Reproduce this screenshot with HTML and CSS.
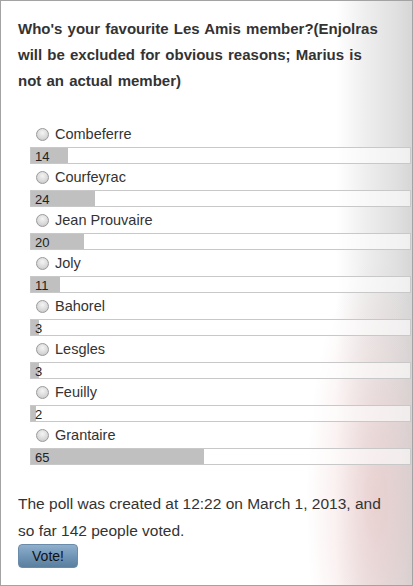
FILE: index.html
```html
<!DOCTYPE html>
<html>
<head>
<meta charset="utf-8">
<link rel="stylesheet" href="styles.css">
</head>
<body>
<div class="page">
  <h1 class="question">Who's your favourite Les Amis member?(Enjolras will be excluded for obvious reasons; Marius is<br>not an actual member)</h1>
  <ul class="options">
    <li class="option"><label class="choice"><span class="radio"></span>Combeferre</label><div class="bar"><div class="fill" style="width:9.86%"></div><span class="count">14</span></div></li>
    <li class="option"><label class="choice"><span class="radio"></span>Courfeyrac</label><div class="bar"><div class="fill" style="width:16.9%"></div><span class="count">24</span></div></li>
    <li class="option"><label class="choice"><span class="radio"></span>Jean Prouvaire</label><div class="bar"><div class="fill" style="width:14.08%"></div><span class="count">20</span></div></li>
    <li class="option"><label class="choice"><span class="radio"></span>Joly</label><div class="bar"><div class="fill" style="width:7.75%"></div><span class="count">11</span></div></li>
    <li class="option"><label class="choice"><span class="radio"></span>Bahorel</label><div class="bar"><div class="fill" style="width:2.11%"></div><span class="count">3</span></div></li>
    <li class="option"><label class="choice"><span class="radio"></span>Lesgles</label><div class="bar"><div class="fill" style="width:2.11%"></div><span class="count">3</span></div></li>
    <li class="option"><label class="choice"><span class="radio"></span>Feuilly</label><div class="bar"><div class="fill" style="width:1.41%"></div><span class="count">2</span></div></li>
    <li class="option"><label class="choice"><span class="radio"></span>Grantaire</label><div class="bar"><div class="fill" style="width:45.77%"></div><span class="count">65</span></div></li>
  </ul>
  <p class="info">The poll was created at 12:22 on March 1, 2013, and so far 142 people voted.</p>
  <button class="vote">Vote!</button>
</div>
</body>
</html>
```
FILE: styles.css
```css
html, body {
  margin: 0;
  padding: 0;
}
body {
  font-family: "Liberation Sans", Arial, sans-serif;
  color: #333;
}
.page {
  box-sizing: border-box;
  width: 413px;
  height: 586px;
  border: 1px solid #a3a3a3;
  padding: 15px 0 0 17px;
  background:
    radial-gradient(ellipse 70px 240px at 375px 500px, rgba(232, 178, 178, 0.45), rgba(232, 178, 178, 0) 100%),
    linear-gradient(to right, #ffffff 0, #ffffff 335px, #eeeeee 365px, #e0e0e0 395px, #d6d6d6 411px);
}
.question {
  margin: 0;
  font-size: 15px;
  font-weight: bold;
  line-height: 26px;
  word-spacing: 1px;
  color: #333;
  padding-right: 10px;
}
.options {
  list-style: none;
  margin: 27px 0 0 12px;
  padding: 0;
}
.option {
  display: flex;
  flex-direction: column;
}
.choice {
  height: 26px;
  display: flex;
  align-items: center;
  font-size: 14.5px;
  padding-left: 6px;
  color: #333;
}
.radio {
  box-sizing: border-box;
  width: 13px;
  height: 13px;
  border-radius: 50%;
  border: 1px solid #9a9a9a;
  background: radial-gradient(circle at 50% 35%, #f4f4f4 0, #d8d8d8 60%, #bdbdbd 100%);
  margin-right: 6px;
}
.bar {
  position: relative;
  box-sizing: border-box;
  width: 381px;
  height: 17px;
  border: 1px solid #c8c8c8;
  background: rgba(255, 255, 255, 0.6);
}
.fill {
  height: 100%;
  background: #c0c0c0;
}
.count {
  position: absolute;
  left: 4px;
  top: 0;
  font-size: 13px;
  line-height: 17px;
  color: #222;
}
.info {
  margin: 25px 0 0 0;
  font-size: 15.5px;
  line-height: 27px;
  color: #333;
  padding-right: 20px;
}
.vote {
  display: block;
  width: 60px;
  height: 24px;
  margin-top: 0;
  border: 1px solid #6a8caa;
  border-radius: 4px;
  background: linear-gradient(to bottom, #8fb0cc 0, #6e93b4 55%, #5b7f9f 100%);
  font-family: "Liberation Sans", Arial, sans-serif;
  font-size: 14px;
  color: #111;
  padding: 0;
}
```
